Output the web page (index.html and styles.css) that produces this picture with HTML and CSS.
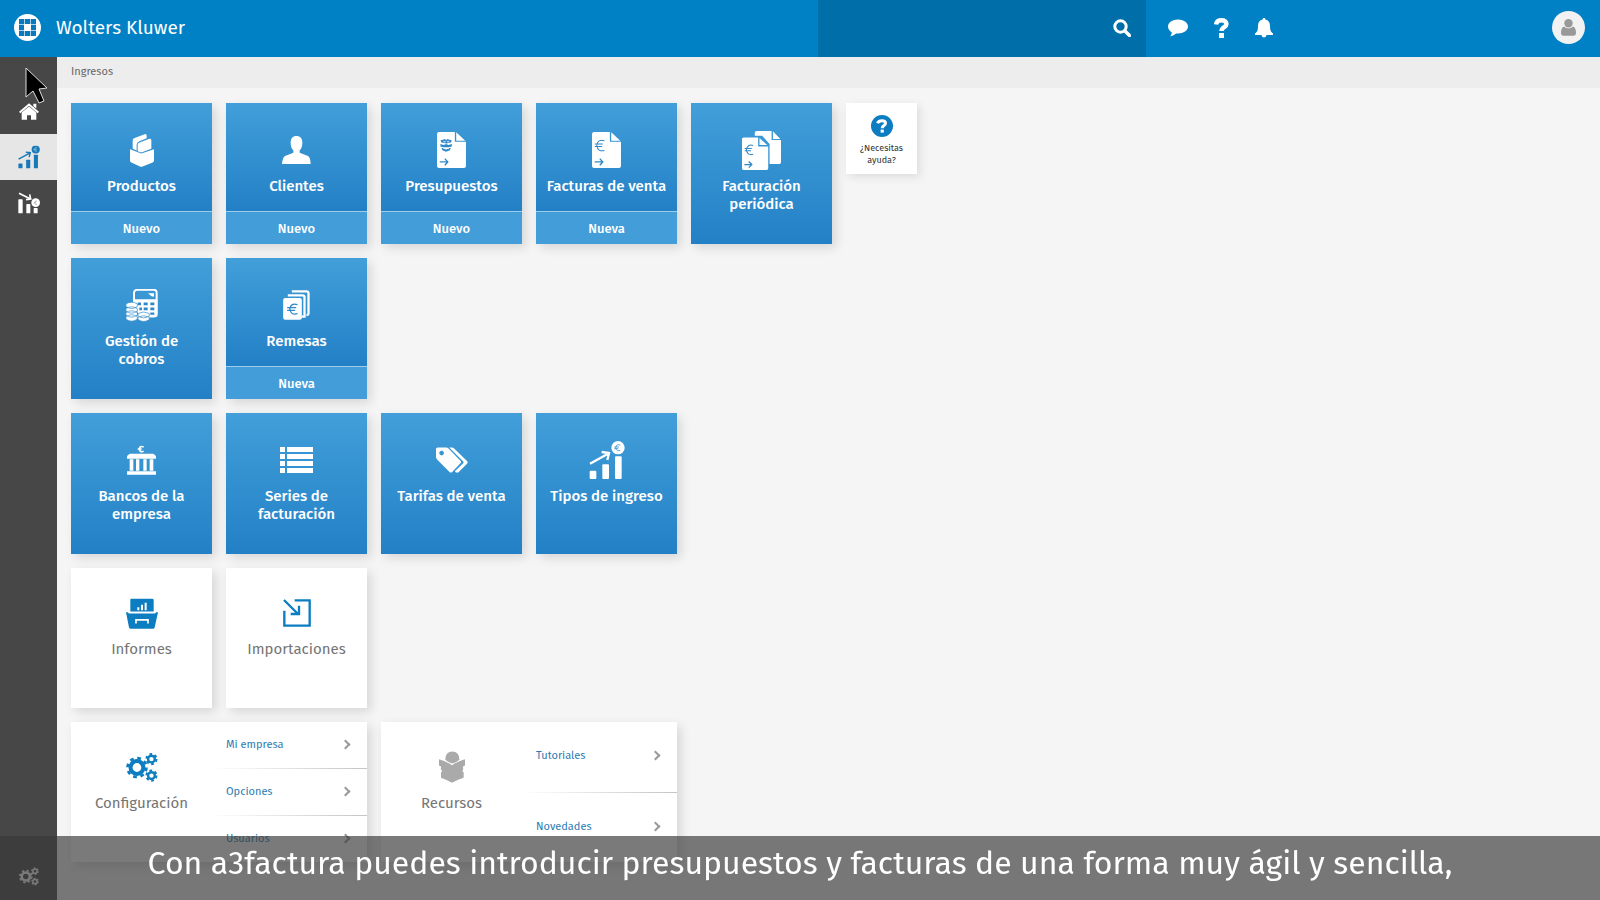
FILE: index.html
```html
<!DOCTYPE html>
<html lang="es">
<head>
<meta charset="utf-8">
<title>Wolters Kluwer - Ingresos</title>
<link rel="stylesheet" href="styles.css">
</head>
<body>
<svg class="defs" aria-hidden="true">
  <symbol id="gears" viewBox="0 0 94 86">
    <g fill="none" stroke="currentColor">
      <circle cx="32" cy="43" r="19" stroke-width="12"/>
      <circle cx="32" cy="43" r="28" stroke-width="8" stroke-dasharray="11 11"/>
      <circle cx="75" cy="18" r="10" stroke-width="7"/>
      <circle cx="75" cy="18" r="15" stroke-width="6" stroke-dasharray="8 7.7"/>
      <circle cx="75" cy="67" r="10" stroke-width="7"/>
      <circle cx="75" cy="67" r="15" stroke-width="6" stroke-dasharray="8 7.7"/>
    </g>
  </symbol>
  <symbol id="growth" viewBox="0 0 108 114">
    <g fill="currentColor">
      <rect x="2" y="89" width="20" height="25" rx="3"/>
      <rect x="40" y="70" width="20" height="44" rx="3"/>
      <rect x="78" y="46" width="20" height="68" rx="3"/>
      <circle cx="87" cy="20" r="20"/>
    </g>
    <path d="M3 68 L57 38 M38 33 L60 36 L55 57" fill="none" stroke="currentColor" stroke-width="7"/>
  </symbol>
</svg>

<header class="topbar">
  <a class="brand" href="#">
    <svg width="27" height="27" viewBox="0 0 27 27" aria-hidden="true">
      <circle cx="13.500" cy="13.500" r="13.500" fill="#fff"/>
      <path fill="#0a78bb" d="M5 5h17v17H5z"/>
      <path d="M10.500 5v17M16.500 5v17M5 10.500h17M5 16.500h17" stroke="#a9d3ec" stroke-width="1"/>
      <path fill="#fff" d="M10 10h7v7h-7z"/>
    </svg>
    <span>Wolters Kluwer</span>
  </a>
  <form class="search">
    <input type="search" aria-label="Buscar">
    <button type="button" aria-label="Buscar">
      <svg width="18" height="18" viewBox="0 0 18 18"><circle cx="7.500" cy="7.500" r="5.700" fill="none" stroke="#fff" stroke-width="3"/><path d="M12 12l4.500 4.500" stroke="#fff" stroke-width="3.400" stroke-linecap="round"/></svg>
    </button>
  </form>
  <nav class="tools" aria-label="Herramientas">
    <button type="button" aria-label="Mensajes"><svg width="20" height="18" viewBox="0 0 20 18"><path fill="#fff" d="M10 .5c5.500 0 10 3 10 7s-4.500 7-10 7l-2-.1C6.500 15.800 4.500 17 2 17.300c1.200-1.200 1.700-2.400 1.800-3.900C1.500 12 0 10 0 7.500c0-4 4.500-7 10-7z"/></svg></button>
    <button type="button" aria-label="Ayuda"><svg width="15" height="20" viewBox="0 0 15 20"><path d="M2 6.500C2.500 3.500 4.500 2.300 7.500 2.300c3 0 5 1.400 5 3.700 0 3.200-5 3-5 7" fill="none" stroke="#fff" stroke-width="4.400"/><path fill="#fff" d="M5 15h5v5H5z"/></svg></button>
    <button type="button" aria-label="Notificaciones"><svg width="18" height="20" viewBox="0 0 18 20"><path fill="#fff" d="M9 0c1 0 1.400.7 1.400 1.500C13.500 2.200 15 4.500 15 8c0 4.500 1 6 3 7.500V17h-6.500a2.500 2.500 0 0 1-5 0H0v-1.500C2 14 3 12.500 3 8c0-3.500 1.500-5.800 4.600-6.500C7.600.7 8 0 9 0z"/></svg></button>
    <button type="button" class="avatar" aria-label="Usuario"><svg width="15" height="17" viewBox="0 0 15 17"><circle cx="7.500" cy="4.200" r="4.200" fill="#999"/><path fill="#999" d="M3 7.500a6 6 0 0 0 9 0c2 .8 3 3 3 6.500 0 1.500-1 2.700-2.500 2.700h-10C1 16.700 0 15.500 0 14c0-3.500 1-5.700 3-6.500z"/></svg></button>
  </nav>
</header>

<div class="shell">
  <nav class="sidebar" aria-label="Principal">
    <a href="#" aria-label="Inicio"><svg width="20" height="17" viewBox="0 0 60 50"><path fill="#fff" d="M30 10L52 28V50H36V36H24V50H8V28z"/><path d="M2 28L30 4L58 28" fill="none" stroke="#fff" stroke-width="6"/><path fill="#fff" d="M43 2h9v14l-9-7z"/></svg></a>
    <a href="#" class="active" aria-label="Ingresos"><svg width="22" height="24" viewBox="0 0 108 114"><use href="#growth" width="108" height="114"/><path d="M94 12q-12-4-14 8q2 12 14 8M76 20h14" fill="none" stroke="#8fbfdf" stroke-width="4"/></svg></a>
    <a href="#" aria-label="Gastos"><svg width="22" height="22" viewBox="0 0 66 66"><g fill="#fff"><rect x="1" y="22" width="13" height="42" rx="2"/><rect x="25" y="36" width="12" height="28" rx="2"/><rect x="47" y="48" width="12" height="16" rx="2"/><circle cx="53" cy="32" r="13"/></g><path d="M3 4L36 20M24 23l14-2L35 7" fill="none" stroke="#fff" stroke-width="5"/><path d="M57 27q-6-2-7 5 1 7 7 5M47 32h7" fill="none" stroke="#999" stroke-width="2"/></svg></a>
    <a href="#" class="settings" aria-label="Ajustes"><svg width="20" height="19"><use href="#gears"/></svg></a>
  </nav>

  <main>
    <div class="crumbs">Ingresos</div>
    <div class="board">
      <section class="row">
        <div class="tile">
          <a class="face" href="#"><span class="icon"><svg width="24" height="33" viewBox="0 0 72 98"><path fill="#fff" d="M0 45L34 58L72 45V80Q72 84 68 85L38 97Q34 99 30 97L4 85Q0 84 0 80zM8 20Q8 14 12 12L44 0Q50-1 50 5V12L28 21Q20 25 20 32V49L8 44zM23 32Q23 28 27 26L58 14Q64 12 64 18V44L34 55L23 51z"/></svg></span><span class="label">Productos</span></a>
          <button type="button" class="new">Nuevo</button>
        </div>
        <div class="tile">
          <a class="face" href="#"><span class="icon"><svg width="29" height="28" viewBox="0 0 87 84"><path fill="#fff" d="M43 0C55 0 61 8 61 20C61 32 57 40 53 43V50L78 60Q85 63 86 84H0Q2 63 9 60L34 50V43C30 40 26 32 26 20C26 8 32 0 43 0z"/></svg></span><span class="label">Clientes</span></a>
          <button type="button" class="new">Nuevo</button>
        </div>
        <div class="tile">
          <a class="face" href="#"><span class="icon"><svg width="29" height="36" viewBox="0 0 86 107"><path fill="#fff" d="M6 0H53V29H86V101Q86 107 80 107H6Q0 107 0 101V6Q0 0 6 0zM57 1L84 26H57z"/><path d="M8 89H31M23 79l9 10-9 10" fill="none" stroke="#2f89c9" stroke-width="4"/><g fill="#2f89c9"><path d="M10 25L24 21L27 25L30 21L44 25L41 31L28 34L13 31z"/><path d="M10 36L20 39L27 36L34 39L44 36V43L35 45H19L10 43z"/><path d="M13 47L22 49L27 53L32 49L41 47L38 54L27 59L16 54z"/></g><path d="M19 29h6M30 29h6M19 49h4M31 49h4" stroke="#fff" stroke-width="3"/></svg></span><span class="label">Presupuestos</span></a>
          <button type="button" class="new">Nuevo</button>
        </div>
        <div class="tile">
          <a class="face" href="#"><span class="icon"><svg width="29" height="36" viewBox="0 0 86 107"><path fill="#fff" d="M6 0H53V29H86V101Q86 107 80 107H6Q0 107 0 101V6Q0 0 6 0zM57 1L84 26H57z"/><g fill="none" stroke="#2f89c9"><path stroke-width="4" d="M8 89H31M23 79l9 10-9 10"/><path stroke-width="3" d="M37 26q-20-6-23 14q3 20 23 15M8 36h24M8 43h22"/></g></svg></span><span class="label">Facturas de venta</span></a>
          <button type="button" class="new">Nueva</button>
        </div>
        <div class="tile">
          <a class="face" href="#"><span class="icon"><svg width="39" height="39" viewBox="0 0 116 116"><path fill="#fff" d="M44 0H88V27H116V94Q116 98 111 98H82V39L60 14H38V6Q38 0 44 0zM92 1L114 24H92z"/><path fill="#fff" d="M5 19H48V46H78V111Q78 116 73 116H5Q0 116 0 111V24Q0 19 5 19zM52 21L75 42H52z"/><g fill="none" stroke="#2f89c9"><path stroke-width="4" d="M7 100H28M20 91l9 9-9 9"/><path stroke-width="3" d="M33 43q-17-5-20 13q3 18 20 13M8 52h21M8 59h19"/></g></svg></span><span class="label">Facturación periódica</span></a>
        </div>
        <a class="help" href="#">
          <svg width="22" height="22" viewBox="0 0 22 22"><circle cx="11" cy="11" r="11" fill="#0d7dc1"/><path d="M6.500 8.200Q7.500 5.700 11 5.700Q14.500 5.700 14.500 8.300C14.500 10.500 11.200 10.500 11.200 13.200" fill="none" stroke="#fff" stroke-width="3"/><path fill="#fff" d="M9.600 14.600h3.200v3H9.600z"/></svg>
          <span>¿Necesitas ayuda?</span>
        </a>
      </section>

      <section class="row">
        <div class="tile">
          <a class="face" href="#"><span class="icon"><svg width="32" height="33" viewBox="0 0 96 98"><rect x="24" y="2" width="68" height="80" rx="9" fill="none" stroke="#fff" stroke-width="6"/><path fill="#fff" d="M24 30h70v52H38z"/><path fill="#fff" d="M66 12h18v10h-6l-5-4z"/><g fill="#2f89c9"><path d="M35 40h10v8H35zM53 40h12v8H53zM73 40h12v8H73zM40 55h8v8h-8zM53 55h12v8H53zM73 55h12v8H73zM73 70h12v7H73z"/></g><g fill="#fff" stroke="#2f89c9" stroke-width="2"><path d="M0 82q16-10 34 0v8q-17 12-34 0zM0 70q16-10 34 0v8q-17 12-34 0zM0 58q16-10 34 0v8q-17 12-34 0zM0 44q16-10 34 0v8q-17 12-34 0zM36 84q17-9 34 0v7q-17 12-34 0zM36 73q17-9 34 0v7q-17 12-34 0z"/></g></svg></span><span class="label">Gestión de cobros</span></a>
        </div>
        <div class="tile">
          <a class="face" href="#"><span class="icon"><svg width="27" height="30" viewBox="0 0 80 90"><g fill="none" stroke="#fff" stroke-width="7"><path d="M26 4H70Q76 4 76 10V70Q76 75 70 75"/><path d="M14 16H58Q64 16 64 22V80H56"/></g><rect x="0" y="24" width="56" height="65" rx="6" fill="#fff"/><path d="M43 44q-20-7-23 13q3 20 23 14M12 53h27M12 61h24" fill="none" stroke="#2f89c9" stroke-width="4"/></svg></span><span class="label">Remesas</span></a>
          <button type="button" class="new">Nueva</button>
        </div>
      </section>

      <section class="row">
        <div class="tile">
          <a class="face" href="#"><span class="icon"><svg width="29" height="30" viewBox="0 0 87 88"><path fill="#fff" d="M8 25H79L87 32V40H0V32zM8 42h11v34H8zM27 42h10v34H27zM49 42h10v34H49zM68 42h11v34H68zM0 78h87v10H0z"/><path d="M50 5q-12-5-13 6q1 11 13 7M32 11h12" fill="none" stroke="#fff" stroke-width="5"/></svg></span><span class="label">Bancos de la empresa</span></a>
        </div>
        <div class="tile">
          <a class="face" href="#"><span class="icon"><svg width="33" height="26" viewBox="0 0 33 26"><path fill="#fff" d="M0 0h5v5H0zM7 0h26v5H7zM0 7h5v5H0zM7 7h26v5H7zM0 14h5v5H0zM7 14h26v5H7zM0 21h5v5H0zM7 21h26v5H7z"/></svg></span><span class="label">Series de facturación</span></a>
        </div>
        <div class="tile">
          <a class="face" href="#"><span class="icon"><svg width="32" height="26" viewBox="0 0 97 78"><path fill="#fff" fill-rule="evenodd" d="M5 1H31Q35 1 38 4L74 41Q78 45 74 49L49 75Q45 79 41 75L4 38Q0 34 0 30V6Q0 1 5 1zM17 11a7 7 0 1 0 .1 0z"/><path fill="#fff" d="M40 1H48Q52 1 55 4L94 42Q98 46 94 50L69 75Q65 79 60 76L57 73L84 47L82 43z"/></svg></span><span class="label">Tarifas de venta</span></a>
        </div>
        <div class="tile">
          <a class="face" href="#"><span class="icon"><svg width="36" height="38" viewBox="0 0 108 114"><use href="#growth" width="108" height="114"/><path d="M94 12q-12-4-14 8q2 12 14 8M76 18h14M76 23h12" fill="none" stroke="#3a93cf" stroke-width="2.500"/></svg></span><span class="label">Tipos de ingreso</span></a>
        </div>
      </section>

      <section class="row">
        <div class="tile plain">
          <a class="face" href="#"><span class="icon"><svg width="32" height="31" viewBox="0 0 96 92"><path fill="#0d7dc1" d="M15 2H79Q83 2 83 6V40H13V6Q13 2 15 2zM0 42H5L9 46H87L91 42H96L86 88Q85 92 80 92H15Q10 92 9 88z"/><path fill="#fff" d="M34 27h6v9h-6zM45 20h6v16h-6zM56 14h6v22h-6z"/><path d="M30 76V65H66V76" fill="none" stroke="#fff" stroke-width="5"/></svg></span><span class="label">Informes</span></a>
        </div>
        <div class="tile plain">
          <a class="face" href="#"><span class="icon"><svg width="28" height="28" viewBox="0 0 84 84"><path d="M35 4H80V80H4V35M3 3L45 45M23 45H48V20" fill="none" stroke="#0d7dc1" stroke-width="7"/></svg></span><span class="label">Importaciones</span></a>
        </div>
      </section>

      <section class="row">
        <div class="tile plain wide">
          <a class="face" href="#"><span class="icon blue"><svg width="32" height="29"><use href="#gears"/></svg></span><span class="label">Configuración</span></a>
          <nav class="links" aria-label="Configuración">
            <a href="#">Mi empresa<i class="chev"></i></a>
            <a href="#">Opciones<i class="chev"></i></a>
            <a href="#">Usuarios<i class="chev"></i></a>
          </nav>
        </div>
        <div class="tile plain wide">
          <a class="face" href="#"><span class="icon"><svg width="26" height="32" viewBox="0 0 78 95"><g fill="#aaa"><path d="M19 24Q20 1 40 1T61 24Q60 30 40 37Q20 30 19 24z"/><path d="M0 24Q22 30 39 42Q56 30 78 24V43Q70 46 72 50Q74 55 70 60Q75 62 74 66V80Q58 84 39 95Q20 84 6 80V66Q5 62 10 60Q4 55 6 50Q8 46 0 43z"/></g></svg></span><span class="label">Recursos</span></a>
          <nav class="links" aria-label="Recursos">
            <a href="#">Tutoriales<i class="chev"></i></a>
            <a href="#">Novedades<i class="chev"></i></a>
          </nav>
        </div>
      </section>
    </div>
  </main>
</div>

<svg class="pointer" width="24" height="38" viewBox="0 0 24 38" aria-hidden="true"><path d="M1 2V31L8 25L14 37L19 35L14 23L22 22z" fill="#000" stroke="#ddd" stroke-width="1"/></svg>
<p class="caption">Con a3factura puedes introducir presupuestos y facturas de una forma muy ágil y sencilla,</p>
</body>
</html>
```

FILE: styles.css
```css
* { box-sizing: border-box; }

body {
  margin: 0;
  height: 100vh;
  display: flex;
  flex-direction: column;
  overflow: hidden;
  background: #f5f5f5;
  font-family: "Fira Sans", "Noto Sans", sans-serif;
  color: #666;
}

a { color: inherit; text-decoration: none; }

button {
  border: 0;
  padding: 0;
  background: none;
  font: inherit;
  color: inherit;
  cursor: pointer;
}

svg { display: block; }

.defs { position: absolute; width: 0; height: 0; }

/* Top bar */
.topbar {
  flex: none;
  display: flex;
  height: 57px;
  background: #0081c6;
  color: #fff;
}

.brand {
  display: flex;
  align-items: center;
  gap: 15px;
  padding: 0 0 2px 14px;
  font-size: 19px;
}

.search {
  display: flex;
  width: 328px;
  margin-left: auto;
  background: #006fa9;
}

.search input {
  flex: 1;
  min-width: 0;
  border: 0;
  padding: 0 16px;
  background: none;
  font: inherit;
  color: #fff;
}

.search button { padding: 0 15px 2px; }

.tools {
  display: flex;
  align-items: center;
  gap: 26px;
  width: 454px;
  padding: 0 15px 2px 22px;
}

.tools .avatar {
  display: flex;
  align-items: center;
  justify-content: center;
  width: 33px;
  height: 33px;
  margin-left: auto;
  border-radius: 50%;
  background: #f2f2f2;
}

/* Body */
.shell { flex: 1; display: flex; min-height: 0; }

.sidebar {
  flex: none;
  display: flex;
  flex-direction: column;
  width: 57px;
  padding-top: 31px;
  background: #474747;
  color: #fff;
}

.sidebar a {
  display: flex;
  align-items: center;
  justify-content: center;
  height: 46px;
}

.sidebar .active { background: #e6e6e6; color: #1879b9; }
.sidebar .settings { height: 48px; margin-top: auto; }

main { flex: 1; min-width: 0; overflow: hidden; }

.crumbs {
  height: 31px;
  padding-left: 14px;
  background: #ededed;
  font-size: 11px;
  line-height: 30px;
}

.board {
  display: flex;
  flex-direction: column;
  gap: 14px;
  padding: 15px 14px;
}

.row { display: flex; align-items: flex-start; gap: 14px; }

.tile {
  display: flex;
  flex-direction: column;
  width: 141px;
  height: 141px;
  background: linear-gradient(#429fd9, #2380c6);
  box-shadow: 4px 4px 10px rgba(0, 0, 0, .12);
  color: #fff;
}

.face {
  flex: 1;
  display: flex;
  flex-direction: column;
  align-items: center;
  gap: 7px;
  padding: 27px 10px 0;
  font-size: 15px;
  font-weight: 500;
  line-height: 18px;
  text-align: center;
}

.face:not(:last-child) { background: linear-gradient(#429fd9, #2380c6); }

.icon {
  display: flex;
  align-items: center;
  justify-content: center;
  height: 40px;
}

.icon.blue { color: #0d7dc1; }

.new {
  height: 33px;
  border-top: 1px solid #9dcdec;
  background: #429dd8;
  font-size: 13px;
  font-weight: 500;
}

.help {
  display: flex;
  flex-direction: column;
  align-items: center;
  gap: 5px;
  width: 71px;
  height: 71px;
  padding-top: 12px;
  background: #fff;
  box-shadow: 3px 3px 9px rgba(0, 0, 0, .1);
  color: #333;
  font-size: 9px;
  line-height: 12px;
  text-align: center;
}

.plain { height: 140px; background: #fff; color: #757575; }
.plain .face, .plain .face:not(:last-child) {
  padding-top: 25px;
  background: none;
  font-weight: 400;
}

.wide { flex-direction: row; width: 296px; }
.wide .face { flex: none; width: 141px; }

.links { flex: 1; display: flex; flex-direction: column; }

.links a {
  flex: 1;
  display: flex;
  align-items: center;
  justify-content: space-between;
  padding: 0 18px 2px 14px;
  color: #2b7cb3;
  font-size: 11px;
}

.links a + a {
  border-top: 1px solid;
  border-image: linear-gradient(90deg, transparent, #c4c4c4) 1;
}

.chev {
  width: 7px;
  height: 7px;
  border: solid #999;
  border-width: 2px 2px 0 0;
  transform: rotate(45deg);
}

/* Layers over the page */
.pointer { position: absolute; left: 25px; top: 66px; }

.caption {
  position: fixed;
  left: 0;
  right: 0;
  bottom: 0;
  height: 64px;
  margin: 0;
  background: rgba(57, 57, 57, .67);
  color: #fff;
  font-size: 32px;
  line-height: 54px;
  text-align: center;
  white-space: nowrap;
}
```
